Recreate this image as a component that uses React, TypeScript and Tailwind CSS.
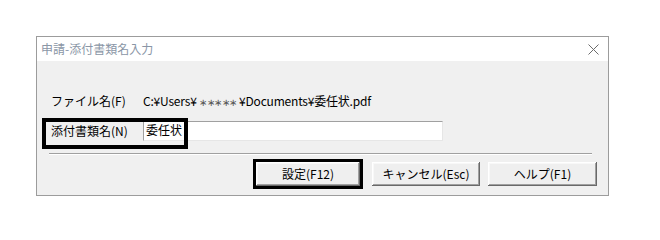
import React from 'react'

const font = { fontFamily: '"Noto Sans CJK JP", "Noto Sans", sans-serif' }

function WinButton({ label, width }: { label: string; width: string }) {
  return (
    <div
      className={`${width} h-[24px] flex items-center justify-center bg-[#efefef] text-[12px] text-black shadow-[inset_-1px_-1px_#696969,inset_1px_1px_#ffffff,inset_-2px_-2px_#a0a0a0,inset_2px_2px_#f8f8f8]`}
    >
      {label}
    </div>
  )
}

export default function App() {
  return (
    <div className="w-[660px] h-[235px] bg-white pt-[36px] pl-[36px]" style={font}>
      <div className="w-[573px] h-[160px] border border-[#9c9c9c] flex flex-col">
        {/* title bar */}
        <div className="h-[24px] bg-white flex items-center justify-between pl-[4px] pr-[9px]">
          <span className="text-[12px] text-[#8a96a6] leading-none">申請-添付書類名入力</span>
          <svg width="11" height="11" viewBox="0 0 11 11">
            <path d="M0.5 0.5 L10.5 10.5 M10.5 0.5 L0.5 10.5" stroke="#6b6b6b" strokeWidth="1" fill="none" />
          </svg>
        </div>

        {/* body */}
        <div className="flex-1 bg-[#f0f0f0] pl-[12px] flex flex-col">
          <div className="mt-[32px] ml-[2px] h-[16px] flex items-center text-[12px] text-black">
            <span className="w-[92px]">ファイル名(F)</span>
            <span className="tracking-[-0.2px]">
              C:¥Users¥ <span className="text-[10px] text-[#555] tracking-[-0.5px]">∗∗∗∗∗</span> ¥Documents¥委任状.pdf
            </span>
          </div>

          <div className="relative mt-[12px] ml-[2px] h-[20px] flex items-center text-[12px] text-black">
            <span className="w-[92px]">添付書類名(N)</span>
            <div className="w-[300px] h-[20px] bg-white border-t border-l border-[#a0a0a0] border-b-[#e6e6e6] border-r-[#e6e6e6] border-b border-r pl-[2px] leading-[15px]">
              委任状
            </div>
            <div className="absolute left-[-9px] top-[-3px] w-[146px] h-[31px] border-[4px] border-black" />
          </div>

          <div className="mt-[12px] w-[543px] h-[2px] border-t border-[#a0a0a0] border-b border-b-white" />

          <div className="mt-[4px] flex items-center justify-end pr-[11px] gap-[8px]">
            <div className="border-[3px] border-black mr-[1px]">
              <WinButton label="設定(F12)" width="w-[104px]" />
            </div>
            <WinButton label="キャンセル(Esc)" width="w-[108px]" />
            <WinButton label="ヘルプ(F1)" width="w-[109px]" />
          </div>
        </div>
      </div>
    </div>
  )
}
